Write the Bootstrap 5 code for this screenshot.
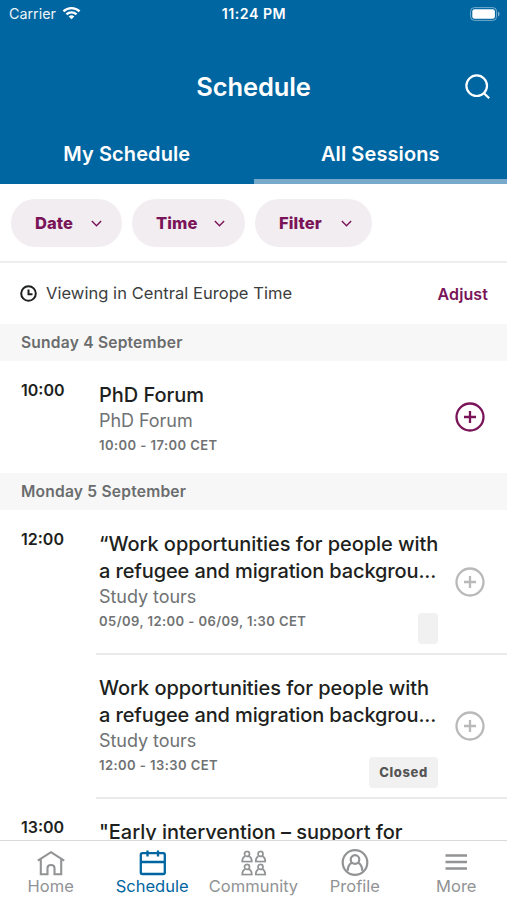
<!DOCTYPE html>
<html lang="en">
<head>
<meta charset="utf-8">
<meta name="viewport" content="width=device-width, initial-scale=1">
<title>Schedule</title>
<link href="https://cdn.jsdelivr.net/npm/bootstrap@5.3.0/dist/css/bootstrap.min.css" rel="stylesheet">
<style>
  :root { --blue: #0066a1; --plum: #7a1458; --ink: #1d1f20; --muted: #707273; }
  body { font-family: Inter, "Liberation Sans", sans-serif; color: var(--ink); background: #fff; }
  svg { display: block; flex: none; }
  .screen { height: 900px; }
  .app-header { background: var(--blue); height: 184px; }
  .status-bar { height: 28px; line-height: 28px; padding: 0 7px 0 9px; }
  .status-bar > * { flex: 1 1 0; }
  .carrier { font-size: 14.3px; opacity: .93; }
  .wifi { margin: -2px 0 0 6px; }
  .clock { font-size: 14.2px; letter-spacing: .48px; padding-right: 1px; }
  .title-bar { height: 97px; padding: 20px 17px 0 42px; }
  .title-bar h1 { font-size: 25.5px; line-height: 36px; letter-spacing: -.1px; }
  .tab-link { height: 59px; font-size: 20px; letter-spacing: .1px; line-height: 58px; border-bottom: 5px solid transparent; color: #fff; text-decoration: none; }
  .tab-link.current { border-color: #77aaca; }
  .filters { height: 79px; padding: 15px 11px 0; gap: 10px; border-bottom: 2px solid #eee; }
  .pill { height: 48px; border-radius: 24px; background: #f2edf1; color: var(--plum); font-size: 16.5px; letter-spacing: .1px; font-weight: 800; border: 0; padding: 0 20px 0 24px; }
  .zone { height: 61px; padding: 0 19px 0 20px; font-size: 16.5px; }
  .zone span { color: #3b3d3e; margin-left: 9px; letter-spacing: .05px; }
  .zone a { color: var(--plum); font-size: 16px; letter-spacing: .1px; }
  .day { height: 37px; line-height: 37px; padding-left: 21px; background: #f7f7f7; color: #6a6c6d; font-size: 15.6px; letter-spacing: .2px; }
  .session { height: 112px; padding-left: 21px; }
  .session.tall { height: 144px; }
  .hour { width: 78px; padding-top: 17px; font-size: 16px; line-height: 24px; }
  .info { width: 339px; padding-top: 21px; }
  .info h2 { font-size: 20px; line-height: 27px; font-weight: 500; letter-spacing: -.05px; }
  .info .l2 { letter-spacing: -.12px; }
  .track { font-size: 18px; line-height: 24px; letter-spacing: -.05px; color: var(--muted); }
  .when { font-size: 13px; line-height: 24px; letter-spacing: .44px; color: var(--muted); }
  .state { margin-top: 4px; height: 31px; min-width: 20px; padding: 0 10px; border-radius: 4px; background: #f1f1f1; color: #555; font-size: 13px; line-height: 31px; letter-spacing: .65px; font-weight: 800; }
  .add { width: 69px; padding-left: 17px; color: var(--plum); }
  .add.off { color: #b9b9b9; }
  .rule { height: 2px; margin: -1px 0 -1px 96px; background: #ebebeb; }
  .tab-bar { height: 60px; border-top: 1px solid #d9d9d9; background: #fff; }
  .tab-bar a { width: 101.4px; padding-top: 8px; color: #919394; text-decoration: none; font-size: 16.5px; line-height: 20px; }
  .tab-bar a.current { color: var(--blue); }
</style>
<script src="https://cdn.jsdelivr.net/npm/bootstrap@5.3.0/dist/js/bootstrap.bundle.min.js"></script>
</head>
<body>
<svg width="0" height="0" class="d-none" aria-hidden="true">
  <symbol id="chevron" viewBox="0 0 10 6"><path d="M.8.8 5 5 9.200.8" fill="none" stroke="currentColor" stroke-width="1.300"/></symbol>
  <symbol id="plus" viewBox="0 0 30 30"><g fill="none" stroke="currentColor" stroke-width="2.300"><circle cx="15" cy="15" r="13.500"/><path d="M15 9v12M9 15h12"/></g></symbol>
  <symbol id="person" viewBox="0 0 12 12"><g fill="none" stroke="currentColor" stroke-width="1.700"><circle cx="6" cy="3.400" r="2.500"/><path d="M3.900 5.600C2 6.500 1.200 8.200 1.200 11h9.600c0-2.800-.8-4.500-2.700-5.400"/></g></symbol>
</svg>
<div class="screen d-flex flex-column overflow-hidden">
  <header class="app-header text-white flex-shrink-0">
    <div class="status-bar d-flex align-items-center">
      <div class="d-flex align-items-center"><span class="carrier">Carrier</span>
        <svg class="wifi" width="19" height="14" viewBox="0 0 20 14" fill="none" stroke="#fff" stroke-width="2.500"><path d="M1.500 5.300C6.300.7 13.700.7 18.500 5.300"/><path d="M4.700 8.400c3-2.800 7.600-2.800 10.600 0"/><path d="M10 13.600 7 10.700q3-2.600 6 0z" fill="#fff" stroke="none"/></svg>
      </div>
      <div class="clock fw-semibold text-center text-nowrap">11:24 PM</div>
      <div class="d-flex justify-content-end"><svg width="30" height="14" viewBox="0 0 30 14"><rect x=".6" y=".6" width="26" height="12.800" rx="3.800" fill="none" stroke="#fff" stroke-opacity=".45"/><rect x="2.300" y="2.300" width="22.600" height="9.400" rx="2.300" fill="#fff"/><path d="M28 4.500c2 .8 2 4.200 0 5z" fill="#fff" fill-opacity=".5"/></svg></div>
    </div>
    <div class="title-bar d-flex align-items-center">
      <h1 class="flex-fill text-center fw-semibold mb-0">Schedule</h1>
      <svg width="25" height="26" viewBox="0 0 25 26" fill="none" stroke="#fff" stroke-width="2.200"><circle cx="11.700" cy="11.700" r="10.300"/><path d="m18.800 19.100 5.400 5.200"/></svg>
    </div>
    <nav class="d-flex text-center">
      <a class="tab-link w-50 fw-semibold" href="#">My Schedule</a>
      <a class="tab-link current w-50 fw-semibold" href="#">All Sessions</a>
    </nav>
  </header>
  <main class="flex-fill overflow-hidden" style="min-height:0">
    <div class="filters d-flex">
      <button class="pill d-flex align-items-center justify-content-between" style="width:111px">Date <svg width="11" height="7"><use href="#chevron"/></svg></button>
      <button class="pill d-flex align-items-center justify-content-between" style="width:113px">Time <svg width="11" height="7"><use href="#chevron"/></svg></button>
      <button class="pill d-flex align-items-center justify-content-between" style="width:117px">Filter <svg width="11" height="7"><use href="#chevron"/></svg></button>
    </div>
    <div class="zone d-flex align-items-center">
      <svg width="17" height="17" viewBox="0 0 17 17" fill="none" stroke="currentColor" stroke-width="2"><circle cx="8.500" cy="8.500" r="7.300"/><path d="M8.500 4.500v4.700h4"/></svg>
      <span>Viewing in Central Europe Time</span>
      <a class="ms-auto fw-semibold text-decoration-none" href="#">Adjust</a>
    </div>
    <div class="day fw-semibold">Sunday 4 September</div>
    <article class="session d-flex">
      <div class="hour fw-semibold">10:00</div>
      <div class="info"><h2 class="mb-0">PhD Forum</h2><div class="track">PhD Forum</div><div class="when fw-semibold">10:00 - 17:00 CET</div></div>
      <div class="add d-flex align-items-center"><svg width="30" height="30"><use href="#plus"/></svg></div>
    </article>
    <div class="day fw-semibold">Monday 5 September</div>
    <article class="session tall d-flex">
      <div class="hour fw-semibold">12:00</div>
      <div class="info"><h2 class="mb-0 text-nowrap">“Work opportunities for people with<br><span class="l2">a refugee and migration backgrou...</span></h2><div class="track">Study tours</div>
        <div class="d-flex justify-content-between"><div class="when fw-semibold">05/09, 12:00 - 06/09, 1:30 CET</div><div class="state"></div></div></div>
      <div class="add off d-flex align-items-center"><svg width="30" height="30"><use href="#plus"/></svg></div>
    </article>
    <div class="rule"></div>
    <article class="session tall d-flex">
      <div class="hour fw-semibold"></div>
      <div class="info"><h2 class="mb-0 text-nowrap">Work opportunities for people with<br><span class="l2">a refugee and migration backgrou...</span></h2><div class="track">Study tours</div>
        <div class="d-flex justify-content-between"><div class="when fw-semibold">12:00 - 13:30 CET</div><div class="state">Closed</div></div></div>
      <div class="add off d-flex align-items-center"><svg width="30" height="30"><use href="#plus"/></svg></div>
    </article>
    <div class="rule"></div>
    <article class="session tall d-flex">
      <div class="hour fw-semibold">13:00</div>
      <div class="info"><h2 class="mb-0 text-nowrap">"Early intervention – support for</h2></div>
    </article>
  </main>
  <nav class="tab-bar d-flex flex-shrink-0">
    <a class="d-flex flex-column align-items-center" href="#"><svg width="28" height="27" viewBox="0 0 28 27" fill="none" stroke="currentColor" stroke-width="2.100"><path d="m.8 11.700 13.200-8.500 13.200 8.500M3.800 9.800v15.400h6.700v-6.300q0-2.900 3.500-2.900t3.500 2.900v6.300h6.700V9.800"/></svg>Home</a>
    <a class="current d-flex flex-column align-items-center" href="#"><svg width="28" height="27" viewBox="0 0 28 27" fill="none" stroke="currentColor" stroke-width="2.300"><rect x="2.800" y="4.200" width="24" height="20.800" rx="1.500"/><path d="M2.800 13h24M9.500 1.500v6M20 1.500v6"/></svg>Schedule</a>
    <a class="d-flex flex-column align-items-center" href="#"><svg width="28" height="27" viewBox="0 0 28 27"><use href="#person" x="2" y="1.300" width="12" height="12.500"/><use href="#person" x="15.500" y="1.300" width="12" height="12.500"/><use href="#person" x="2" y="14.300" width="12" height="12.500"/><use href="#person" x="15.500" y="14.300" width="12" height="12.500"/></svg>Community</a>
    <a class="d-flex flex-column align-items-center" href="#"><svg width="28" height="27" viewBox="0 0 28 27" fill="none" stroke="currentColor" stroke-width="2.200"><circle cx="14" cy="13.500" r="12.300"/><circle cx="14" cy="10.500" r="4.300"/><path d="M10.800 13.800c-2.800 1.400-4 4-4 8M17.200 13.800c2.800 1.400 4 4 4 8"/></svg>Profile</a>
    <a class="d-flex flex-column align-items-center" href="#"><svg width="28" height="27" viewBox="0 0 28 27" stroke="currentColor" stroke-width="2.300"><path d="M3.500 6.500h21.500M3.500 13h21.500M3.500 19.500h21.500"/></svg>More</a>
  </nav>
</div>
</body>
</html>
